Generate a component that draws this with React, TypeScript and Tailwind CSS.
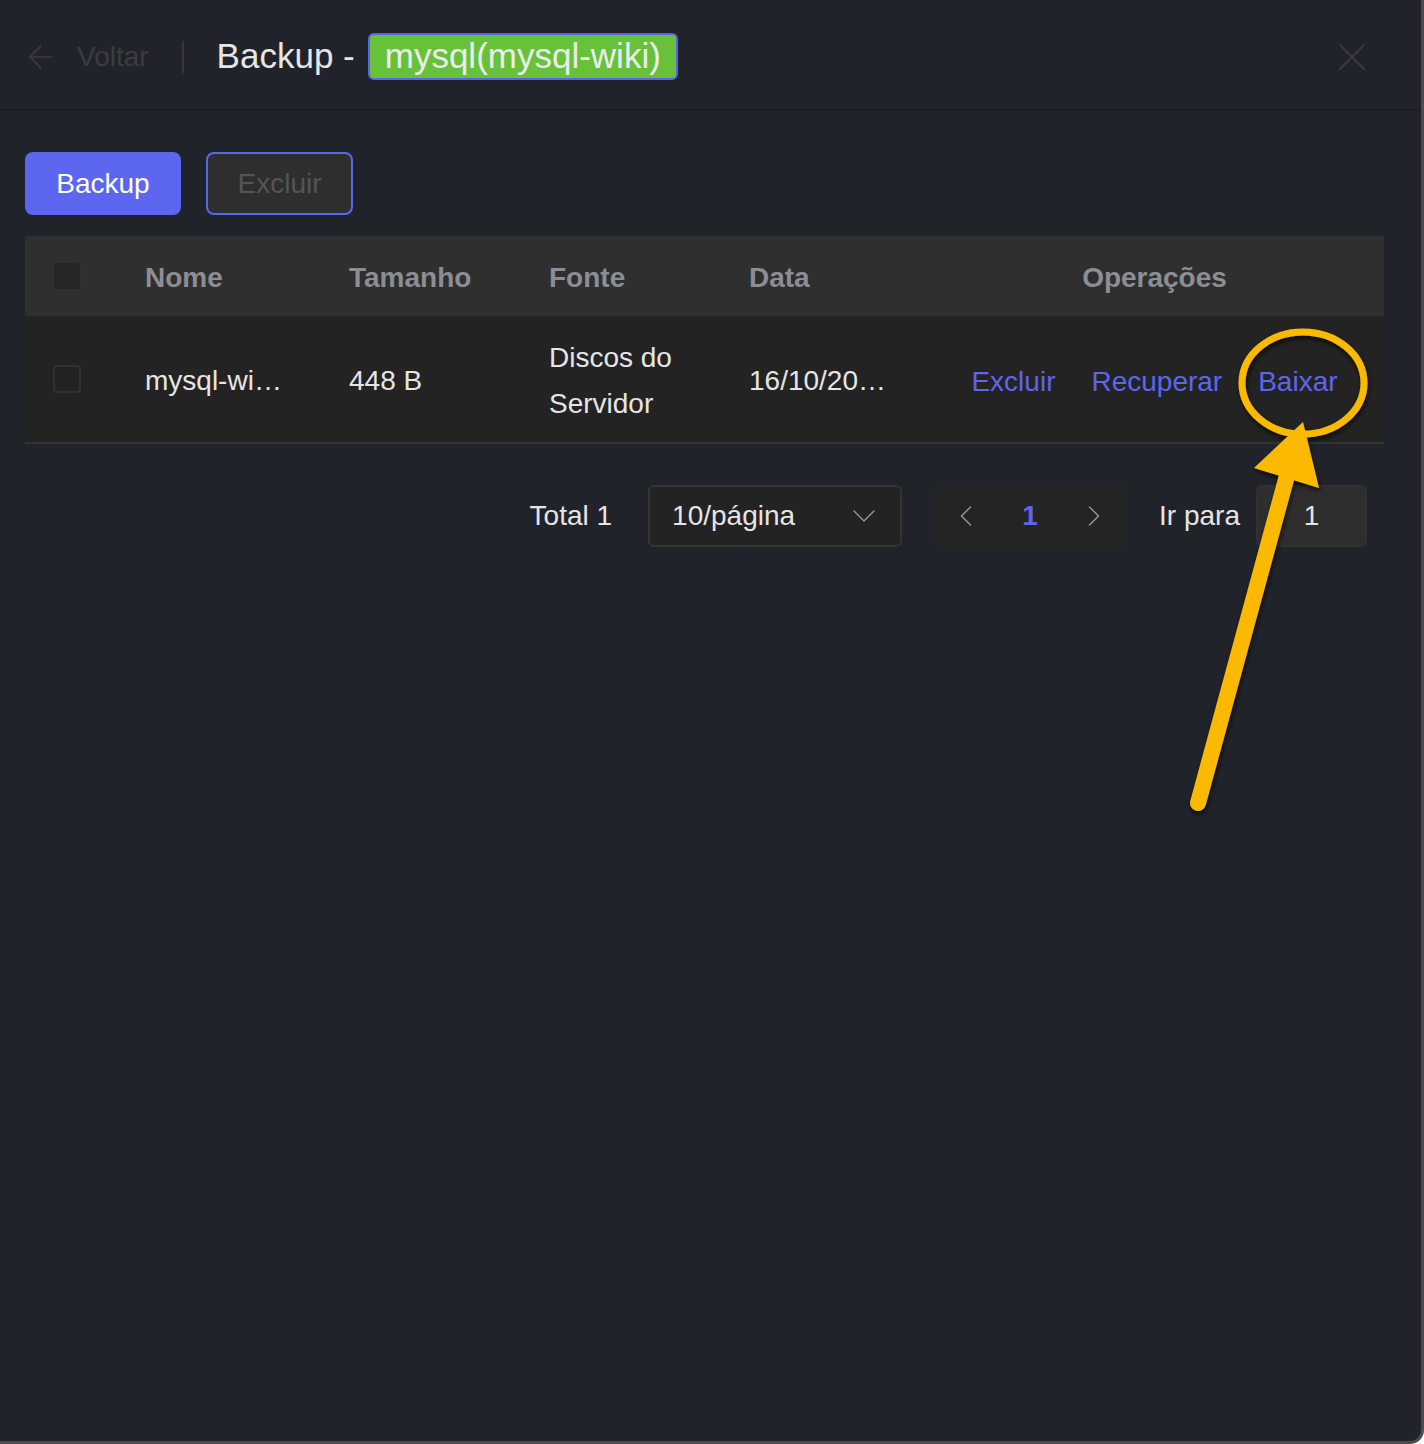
import { ArrowLeft, X, ChevronDown, ChevronLeft, ChevronRight } from 'lucide-react'

const font = { fontFamily: '"Liberation Sans", Arial, sans-serif' }

function Annotation() {
  return (
    <svg className="absolute inset-0 pointer-events-none" width="1424" height="1444" viewBox="0 0 1424 1444">
      <defs>
        <filter id="sh" x="-20%" y="-20%" width="140%" height="140%">
          <feDropShadow dx="1" dy="3" stdDeviation="2.5" floodColor="#000" floodOpacity="0.7" />
        </filter>
      </defs>
      <g filter="url(#sh)">
        <ellipse cx="1303" cy="383" rx="61" ry="51" fill="none" stroke="#fbb900" strokeWidth="7" />
        <line x1="1198" y1="803" x2="1288" y2="472" stroke="#fbb900" strokeWidth="16" strokeLinecap="round" />
        <polygon points="1303,422 1254,468 1319,488" fill="#fbb900" />
      </g>
    </svg>
  )
}

export default function App() {
  return (
    <div
      style={font}
      className="relative w-full h-[1444px] bg-[#21232b] border-r-[3px] border-b-[3px] border-[#4b4b50] rounded-br-[14px] overflow-hidden"
    >
      {/* header */}
      <div className="h-[111px] flex items-center pt-[4px] pl-[22px] pr-[45px] border-b-2 border-[#1c1d21]">
        <div className="flex items-center gap-[17px] text-[#3b3c40]">
          <ArrowLeft size={38} strokeWidth={1} />
          <span className="text-[28px]">Voltar</span>
        </div>
        <div className="ml-[33px] w-[2px] h-[32px] bg-[#38383b]" />
        <div className="ml-[33px] flex items-center gap-[13px]">
          <span className="text-[35px] text-[#e6e6e6]">Backup -</span>
          <span className="h-[47px] px-[15px] flex items-center bg-[#67c23a] border-2 border-[#5b63f0] rounded-[6px] text-[35px] text-[#ececec]">
            mysql(mysql-wiki)
          </span>
        </div>
        <X size={48} strokeWidth={0.9} className="ml-auto text-[#3a3b3f]" />
      </div>

      <div className="pl-[25px] pt-[41px] pr-[37px]">
        {/* actions */}
        <div className="flex gap-[25px]">
          <button className="w-[156px] h-[63px] bg-[#5d66ee] rounded-[8px] text-[28px] text-white">Backup</button>
          <button className="w-[147px] h-[63px] bg-[#2e2e2e] border-2 border-[#5d66ee] rounded-[8px] text-[28px] text-[#545454]">
            Excluir
          </button>
        </div>

        {/* table */}
        <div className="mt-[21px] text-[28px]">
          <div className="grid grid-cols-[96px_204px_200px_200px_200px_1fr] h-[80px] items-center pt-[3px] bg-[#2f2f2f] font-bold text-[#8b8e94]">
            <div className="pl-[28px]">
              <div className="w-[28px] h-[28px] -mt-[3px] rounded-[4px] bg-[#262626] border border-[#363032]" />
            </div>
            <div className="pl-[24px]">Nome</div>
            <div className="pl-[24px]">Tamanho</div>
            <div className="pl-[24px]">Fonte</div>
            <div className="pl-[24px]">Data</div>
            <div className="text-center">Operações</div>
          </div>
          <div className="grid grid-cols-[96px_204px_200px_200px_200px_1fr] h-[128px] items-center pt-[3px] bg-[#232323] border-b-2 border-[#333335] text-[#e5e5e5]">
            <div className="pl-[28px]">
              <div className="w-[28px] h-[28px] -mt-[3px] rounded-[4px] border-2 border-[#363032]" />
            </div>
            <div className="pl-[24px] whitespace-nowrap">mysql-wi…</div>
            <div className="pl-[24px]">448 B</div>
            <div className="pl-[24px] pr-[24px] leading-[46px]">Discos do Servidor</div>
            <div className="pl-[24px] whitespace-nowrap">16/10/20…</div>
            <div className="flex justify-center gap-[36px] pt-[3px] text-[#5d66ee]">
              <span>Excluir</span>
              <span>Recuperar</span>
              <span>Baixar</span>
            </div>
          </div>
        </div>

        {/* pagination */}
        <div className="mt-[41px] flex items-center justify-end pr-[17px] text-[28px] text-[#e5e5e5]">
          <span>Total 1</span>
          <div className="ml-[36px] w-[254px] h-[62px] flex items-center justify-between pl-[22px] pr-[16px] bg-[#232323] border-2 border-[#363234] rounded-[6px]">
            <span>10/página</span>
            <ChevronDown size={40} strokeWidth={0.8} className="text-[#9a9a9a]" />
          </div>
          <div className="ml-[32px] flex h-[62px] bg-[#242424]">
            <div className="w-[64px] flex items-center justify-center text-[#9a9a9a]">
              <ChevronLeft size={36} strokeWidth={0.9} />
            </div>
            <div className="w-[64px] flex items-center justify-center font-bold text-[#5d66ee]">1</div>
            <div className="w-[64px] flex items-center justify-center text-[#9a9a9a]">
              <ChevronRight size={36} strokeWidth={0.9} />
            </div>
          </div>
          <span className="ml-[33px]">Ir para</span>
          <div className="ml-[16px] w-[111px] h-[62px] flex items-center justify-center bg-[#2e2e2e] border-2 border-[#333032] rounded-[6px]">
            1
          </div>
        </div>
      </div>

      <Annotation />
    </div>
  )
}
